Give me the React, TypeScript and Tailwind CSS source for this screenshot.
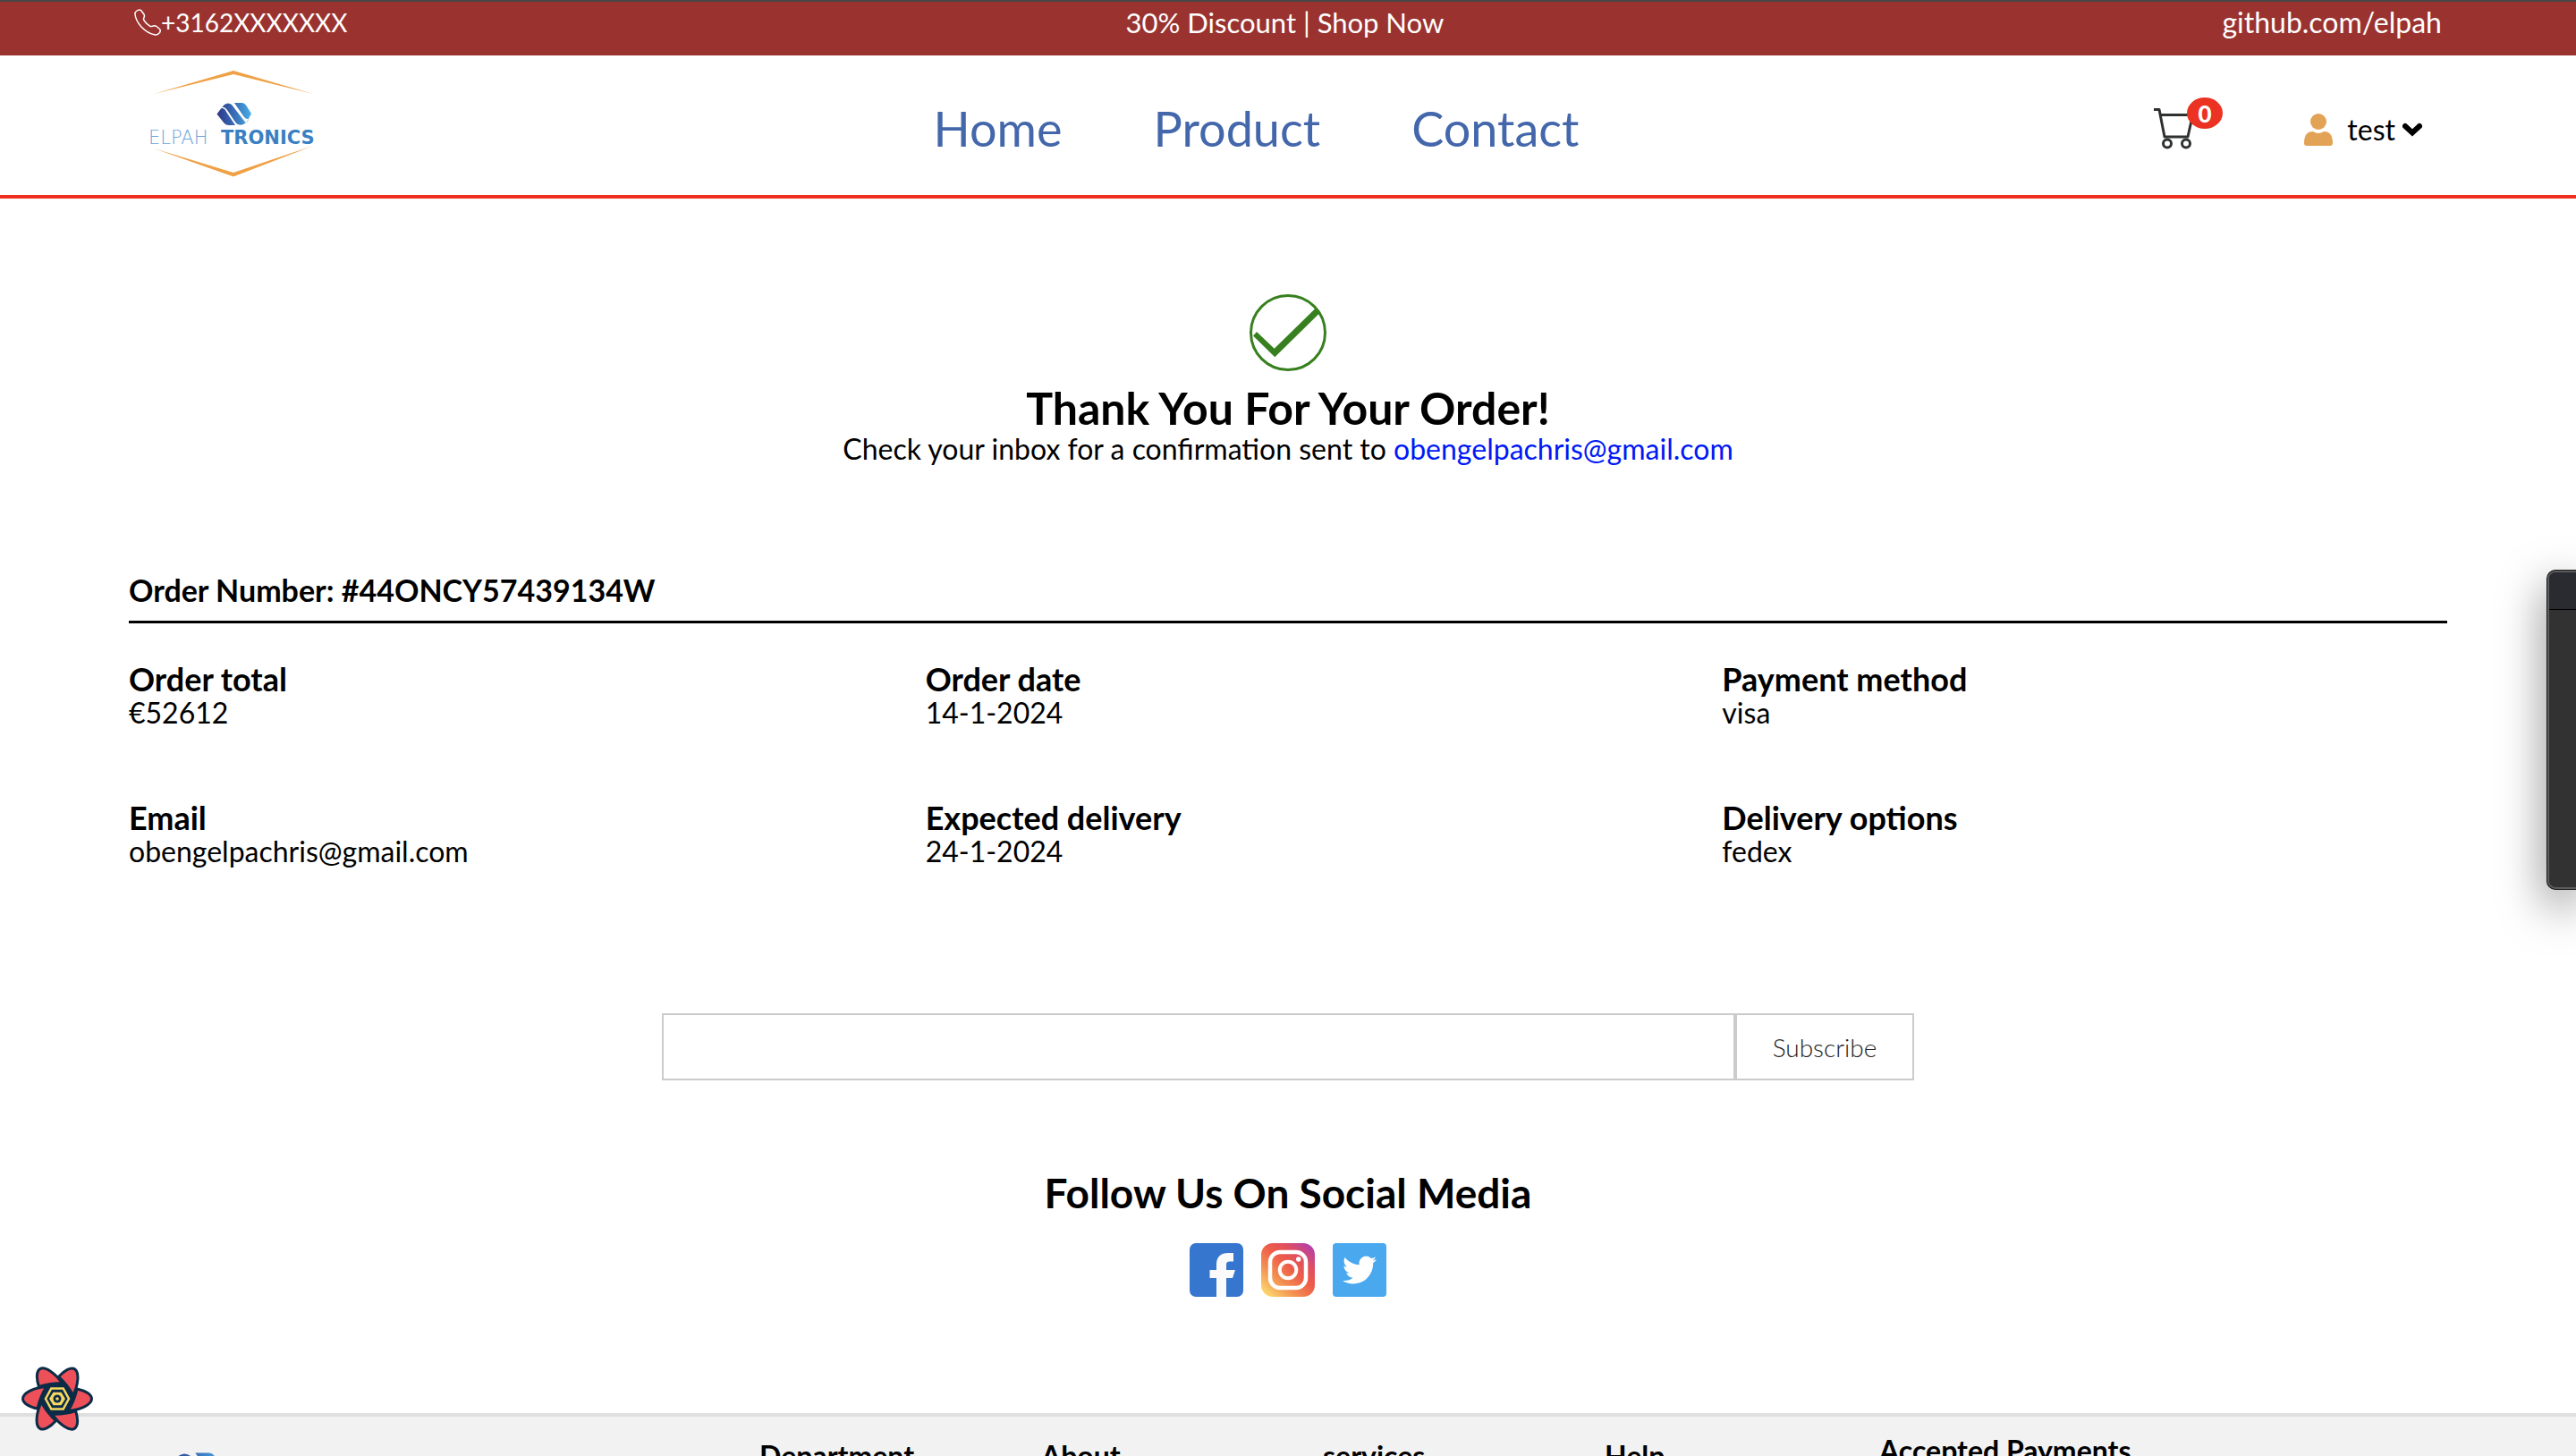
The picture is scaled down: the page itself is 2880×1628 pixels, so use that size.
import { FaTwitter } from "react-icons/fa";

const details = [
  { label: "Order total", value: "€52612" },
  { label: "Order date", value: "14-1-2024" },
  { label: "Payment method", value: "visa" },
  { label: "Email", value: "obengelpachris@gmail.com" },
  { label: "Expected delivery", value: "24-1-2024" },
  { label: "Delivery options", value: "fedex" },
];

const footerLinks = ["Department", "About", "services", "Help"];

function MarkShapes({ id }: { id: string }) {
  return (
    <>
      <defs>
        <linearGradient id={id} gradientUnits="userSpaceOnUse" x1="103" y1="58" x2="141" y2="58">
          <stop offset="0" stopColor="#2e3788" />
          <stop offset="0.55" stopColor="#3a74bb" />
          <stop offset="1" stopColor="#48aeea" />
        </linearGradient>
      </defs>
      <g fill={`url(#${id})`}>
        <path d="M102.500 57.500L107 51.500C110 50 112 53 113 55L123 70H115Q112 70 110 67Z" />
        <path d="M108 50L111 47Q115 44 119 47L134 66.500Q136 68 139 62L135 67Q131 71 126 69Q124 68 122 65L114 53Q111 49 108 50Z" />
        <path d="M122 45H131Q133 45 135 47.500L141 57L138 62.500Q136 64 133 61Z" />
      </g>
    </>
  );
}

function Logo() {
  return (
    <svg className="h-[140px] w-[236px]" viewBox="4 0 236 140" role="img" aria-label="Elpah Tronics">
      <path d="M32 35L121 9L210 35L121 13Z" fill="#f0a045" />
      <path d="M32 96L121 127.500L210 93L121 123Z" fill="#f0a045" />
      <MarkShapes id="logo-mark" />
      <text x="26" y="91" fontFamily="'DejaVu Sans', sans-serif" fontSize="21" fontWeight="200" fill="#6ea3d8">
        ELPAH
      </text>
      <text x="107" y="91" fontFamily="'DejaVu Sans', sans-serif" fontSize="21" fontWeight="700" fill="#3a7fc3">
        TRONICS
      </text>
    </svg>
  );
}

function PhoneIcon() {
  return (
    <svg className="size-[30px]" viewBox="0 0 30 30" fill="none" stroke="white" strokeWidth="1.500" strokeLinejoin="round" aria-hidden="true">
      <path d="M1 6Q0.500 4 2.500 2.500Q5.500 0 7.500 1.500L11 6Q12 8 10.800 10Q10 11.500 11.500 13.500Q14 17 17.500 19.200Q19 19.800 20.500 19.200Q23 18 25 19.500L28.500 22.500Q30 24 28.500 26.500Q26 29.500 23.500 29Q15 27.500 8 20Q1.500 12.500 1 6Z" />
    </svg>
  );
}

function CartIcon() {
  return (
    <svg className="size-12" viewBox="0 0 48 48" fill="none" stroke="#2f3131" strokeWidth="3" aria-hidden="true">
      <path d="M2 3.500H8L14 34H40L45.500 9.500H10" strokeLinejoin="round" />
      <circle cx="17" cy="41.500" r="4.500" />
      <circle cx="38" cy="41.500" r="4.500" />
    </svg>
  );
}

function UserIcon() {
  return (
    <svg className="h-9 w-8" viewBox="0 0 32 36" fill="#e3a356" aria-hidden="true">
      <circle cx="16" cy="9" r="9" />
      <path d="M10 20Q13 22 16 22T22 20Q32 20 32 33Q32 36 29 36H3Q0 36 0 33Q0 20 10 20Z" />
    </svg>
  );
}

function CheckIcon() {
  return (
    <svg className="size-[88px]" viewBox="0 0 88 88" aria-hidden="true">
      <circle cx="44" cy="44" r="41.500" fill="none" stroke="#38801f" strokeWidth="3" />
      <path d="M5 47.500L9 43L28.700 61.700L74.700 16.700L78.700 22.700L29.300 71.300Z" fill="#38801f" />
    </svg>
  );
}

function FacebookIcon() {
  return (
    <svg className="size-[60px]" viewBox="0 0 60 60" aria-hidden="true">
      <rect width="60" height="60" rx="7" fill="#3676cf" />
      <path d="M30 60V39H22.500V30H30V24C30 15 35 11 43 11H49V20.500H45C42 20.500 41 22 41 24V30H51L48 39H41V60Z" fill="#fafafa" />
    </svg>
  );
}

function InstagramIcon() {
  return (
    <svg className="size-[60px]" viewBox="0 0 60 60" aria-hidden="true">
      <defs>
        <linearGradient id="insta" x1="0.100" y1="1" x2="0.950" y2="0.050">
          <stop offset="0" stopColor="#fddc70" />
          <stop offset="0.300" stopColor="#f39152" />
          <stop offset="0.550" stopColor="#ee5d48" />
          <stop offset="0.750" stopColor="#e0505e" />
          <stop offset="1" stopColor="#b13fae" />
        </linearGradient>
      </defs>
      <rect width="60" height="60" rx="13" fill="url(#insta)" />
      <rect x="10" y="10" width="40" height="40" rx="11" fill="none" stroke="white" strokeWidth="4.500" />
      <circle cx="30" cy="30" r="9.300" fill="none" stroke="white" strokeWidth="4" />
      <circle cx="41.700" cy="18" r="2.700" fill="white" />
    </svg>
  );
}

function FlowerIcon() {
  return (
    <svg className="h-[72px] w-20" viewBox="-40 -36 80 72" aria-hidden="true">
      <path d="M21 0L10.500 18H-10.500L-21 0L-10.500 -18H10.500Z" fill="#0b2b47" />
      <g fill="#ee5059" stroke="#0b2b47" strokeWidth="3" strokeLinejoin="round">
        {[0, 60, 120, 180, 240, 300].map((angle) => (
          <path key={angle} transform={`rotate(${angle})`} d="M22 -11C32 -9 38.500 -4.500 38.500 0C38.500 6.500 26 12.500 12 13.500Q19 3 22 -11Z" />
        ))}
      </g>
      <g fill="#0b2b47" stroke="#f7d860" strokeWidth="2.500">
        <path d="M13 0L6.700 11.500H-6.700L-13 0L-6.700 -11.500H6.700Z" />
        <path d="M7.500 0L3.800 6H-3.800L-7.500 0L-3.800 -6H3.800Z" fill="#f7d860" />
      </g>
      <circle r="4.500" fill="#0b2b47" />
      <circle r="1.800" fill="#f7d860" />
    </svg>
  );
}

export default function App() {
  return (
    <div className="relative flex h-screen flex-col overflow-hidden bg-white font-[Lato,sans-serif] text-[32px] leading-[34px] text-black">
      <div className="flex h-[62px] shrink-0 items-start justify-between border-t-2 border-[#4a4646] bg-[#9a3330] px-[150px] pt-1.5 text-white">
        <a href="tel:+3162" className="flex items-center text-[28px]">
          <PhoneIcon />
          <span>+3162XXXXXXX</span>
        </a>
        <a href="#shop" className="text-[31px]">
          30% Discount | Shop Now
        </a>
        <a href="https://github.com/elpah">github.com/elpah</a>
      </div>

      <header className="flex h-40 shrink-0 items-center justify-between border-b-4 border-[#ee2f20] px-36">
        <a href="#home" className="w-[263px]">
          <Logo />
        </a>
        <nav className="flex gap-[102px] pt-2 text-[54px] leading-[64px] text-[#4467ab]">
          <a href="#home">Home</a>
          <a href="#product">Product</a>
          <a href="#contact">Contact</a>
        </nav>
        <div className="flex w-[334px] items-center justify-between pt-1.5 pr-7 pl-1">
          <button type="button" className="relative" aria-label="Cart">
            <CartIcon />
            <span className="absolute -top-2.5 left-[39px] flex h-[35px] w-10 items-center justify-center rounded-[50%] bg-[#eb3223] text-[26px] font-black text-white">
              0
            </span>
          </button>
          <button type="button" className="flex items-center pt-1">
            <UserIcon />
            <span className="ml-4">test</span>
            <svg className="ml-2 h-4 w-[22px]" viewBox="0 0 22 16" fill="none" stroke="black" strokeWidth="6" strokeLinecap="round" aria-hidden="true">
              <path d="M3 4L11 11.500L19 4" />
            </svg>
          </button>
        </div>
      </header>

      <main className="shrink-0 px-36 pt-[106px]">
        <section className="flex flex-col items-center">
          <CheckIcon />
          <h1 className="mt-3.5 text-[50px] leading-[52px] font-bold">Thank You For Your Order!</h1>
          <p className="leading-10">
            Check your inbox for a confirmation sent to{" "}
            <a href="mailto:obengelpachris@gmail.com" className="text-[#0019f5]">
              obengelpachris@gmail.com
            </a>
          </p>
        </section>

        <h2 className="mt-[118px] border-b-[3px] border-black pb-3.5 text-[34px] leading-10 font-bold">
          Order Number: #44ONCY57439134W
        </h2>
        <dl className="mt-[42px] grid grid-cols-3 gap-x-20 gap-y-[79px]">
          {details.map((item) => (
            <div key={item.label}>
              <dt className="text-[36px] leading-10 font-bold">{item.label}</dt>
              <dd className="leading-9">{item.value}</dd>
            </div>
          ))}
        </dl>

        <form className="mx-auto mt-[163px] flex h-[75px] w-full max-w-[1400px]">
          <input type="email" aria-label="Email address" className="min-w-0 flex-1 border-2 border-[#cbcbcb] px-5 outline-none" />
          <button type="button" className="w-[200px] border-2 border-[#cbcbcb] text-[28px] font-light text-[#222222]">
            Subscribe
          </button>
        </form>

        <section className="mt-[98px] flex flex-col items-center">
          <h2 className="text-[46px] leading-[56px] font-bold">Follow Us On Social Media</h2>
          <div className="mt-7 flex gap-5">
            <a href="#facebook" aria-label="Facebook">
              <FacebookIcon />
            </a>
            <a href="#instagram" aria-label="Instagram">
              <InstagramIcon />
            </a>
            <a href="#twitter" aria-label="Twitter" className="flex size-[60px] items-center justify-center rounded bg-[#4aa8ef] text-white">
              <FaTwitter size={38} />
            </a>
          </div>
        </section>
      </main>

      <footer className="mt-[130px] flex shrink-0 items-start border-t-4 border-[#dfdfdf] bg-[#f2f2f2] px-36 pt-5 leading-9 font-bold">
        <div className="w-[705px] pt-5 pl-10">
          <svg className="h-11 w-[67px]" viewBox="102 45 39 25" role="img" aria-label="Elpah Tronics">
            <MarkShapes id="footer-mark" />
          </svg>
        </div>
        <div className="grid w-[1252px] grid-cols-[315px_315px_315px_auto] pt-1.5">
          {footerLinks.map((title) => (
            <h3 key={title}>{title}</h3>
          ))}
        </div>
        <h3>Accepted Payments</h3>
      </footer>

      <button type="button" aria-label="Open query devtools" className="absolute bottom-7 left-6">
        <FlowerIcon />
      </button>

      <aside
        aria-label="Floating window"
        className="absolute top-[637px] right-0 h-[358px] w-[33px] overflow-hidden rounded-l-[10px] border border-r-0 border-[#161616] bg-[#323232] shadow-[0_18px_50px_rgba(0,0,0,0.5)]"
      >
        <div className="h-full rounded-l-[9px] border-2 border-r-0 border-[#5c5c5c]">
          <div className="h-[42px] rounded-tl-[7px] border-b border-black bg-[#2a2b30]" />
        </div>
      </aside>
    </div>
  );
}
